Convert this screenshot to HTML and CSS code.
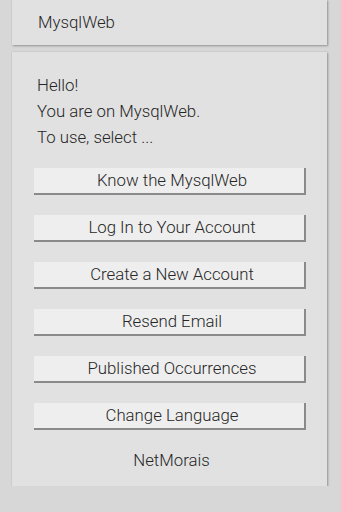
FILE: index.html
```html
<!DOCTYPE html>
<html>
<head>
<meta charset="utf-8">
<link rel="stylesheet" href="styles.css">
</head>
<body>
<div class="page">
  <div class="card header">MysqlWeb</div>
  <div class="card main">
    <div class="intro">
      <div>Hello!</div>
      <div>You are on MysqlWeb.</div>
      <div>To use, select ...</div>
    </div>
    <div class="buttons">
      <button class="btn">Know the MysqlWeb</button>
      <button class="btn">Log In to Your Account</button>
      <button class="btn">Create a New Account</button>
      <button class="btn">Resend Email</button>
      <button class="btn">Published Occurrences</button>
      <button class="btn">Change Language</button>
    </div>
    <div class="footer">NetMorais</div>
  </div>
</div>
</body>
</html>
```

FILE: styles.css
```css
html, body {
  margin: 0;
  padding: 0;
  background: #d7d7d7;
  font-family: Roboto, "Liberation Sans", sans-serif;
  font-weight: 300;
  color: #262626;
}
.page {
  display: flex;
  flex-direction: column;
  gap: 7px;
  padding: 0 14px 0 12px;
}
.card {
  background: #e1e1e1;
  box-shadow: 1px 1px 2px rgba(0,0,0,0.3), 0 0 1px rgba(0,0,0,0.15);
}
.header {
  height: 45px;
  box-sizing: border-box;
  padding: 11px 0 0 26px;
  font-size: 16.8px;
  line-height: 22px;
}
.main {
  padding: 20px 21px 13px 22px;
}
.intro {
  padding-left: 3px;
  font-size: 16.8px;
  line-height: 26px;
}
.buttons {
  display: flex;
  flex-direction: column;
  gap: 20px;
  margin-top: 18px;
}
.btn {
  height: 27px;
  margin: 0;
  padding: 0 0 0 6px;
  border: none;
  border-right: 2px solid #8a8a8a;
  border-bottom: 2px solid #8a8a8a;
  background: #eeeeee;
  font-family: Roboto, "Liberation Sans", sans-serif;
  font-weight: 300;
  font-size: 16.8px;
  color: #262626;
  line-height: 25px;
  text-align: center;
}
.footer {
  margin-top: 17px;
  padding-left: 3px;
  text-align: center;
  font-size: 16.8px;
  line-height: 26px;
}
```
